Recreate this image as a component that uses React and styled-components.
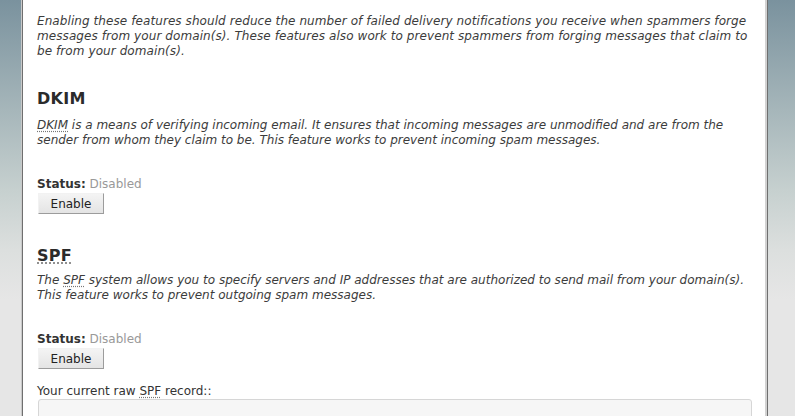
import React from 'react';
import styled, { createGlobalStyle } from 'styled-components';

const GlobalStyle = createGlobalStyle`
  html, body {
    margin: 0;
    padding: 0;
    background: #e5e5e5;
  }
  body {
    font-family: Verdana, "DejaVu Sans", sans-serif;
    font-size: 12px;
    color: #333;
  }
`;

const App = () => {
  return (
    <>
      <GlobalStyle />
      <Page>
        <Rail side="left" />
        <Main>
          {/* intro */}
          <Intro>
            Enabling these features should reduce the number of failed delivery notifications you receive when
            spammers forge messages from your domain(s). These features also work to prevent spammers from
            forging messages that claim to be from your domain(s).
          </Intro>

          {/* DKIM */}
          <Section>
            <Heading>DKIM</Heading>
            <Description>
              <Abbr title="DomainKeys Identified Mail">DKIM</Abbr> is a means of verifying incoming email. It
              ensures that incoming messages are unmodified and are from the sender from whom they claim to be.
              This feature works to prevent incoming spam messages.
            </Description>
            <Status>
              <strong>Status:</strong> <Muted>Disabled</Muted>
            </Status>
            <Button>Enable</Button>
          </Section>

          {/* SPF */}
          <Section>
            <Heading tight>
              <Abbr title="Sender Policy Framework">SPF</Abbr>
            </Heading>
            <Description>
              The <Abbr title="Sender Policy Framework">SPF</Abbr> system allows you to specify servers and IP
              addresses that are authorized to send mail from your domain(s). This feature works to prevent
              outgoing spam messages.
            </Description>
            <Status>
              <strong>Status:</strong> <Muted>Disabled</Muted>
            </Status>
            <Button>Enable</Button>
            <RecordLabel>
              Your current raw <Abbr title="Sender Policy Framework">SPF</Abbr> record::
            </RecordLabel>
            <RecordBox readOnly value="" />
          </Section>
        </Main>
        <Rail side="right" />
      </Page>
    </>
  );
};

const Page = styled.div`
  display: flex;
  width: 795px;
  height: 416px;
  overflow: hidden;
`;

const Rail = styled.div`
  flex: 0 0 ${(p) => (p.side === 'left' ? '21px' : '27px')};
  background: linear-gradient(#7a929e 0, #a6b6ba 110px, #c6d0cf 190px, #dcdfde 250px, #e6e6e6 300px, #e6e6e6 100%);
  ${(p) =>
    p.side === 'left'
      ? 'border-right: 1px solid #c9c9c9;'
      : 'border-left: 1px solid #6f6f6f;'}
`;

const Main = styled.main`
  flex: 1;
  background: #fff;
  border-left: 1px solid #6f6f6f;
  border-right: 2px solid #d2d2d2;
  padding: 14px 13px 0 14px;
  overflow: hidden;
`;

const Intro = styled.p`
  margin: 0;
  font-style: italic;
  line-height: 15px;
  letter-spacing: 0.08px;
  color: #3c3c3c;
`;

const Section = styled.section`
  margin-top: 31px;

  & + & {
    margin-top: 33px;
  }
`;

const Heading = styled.h2`
  margin: 0 0 ${(p) => (p.tight ? '8px' : '10px')};
  font-size: 16px;
  line-height: 18px;
  font-weight: bold;
  color: #2b2b2b;
  letter-spacing: 0.3px;
`;

const Description = styled.p`
  margin: 0 0 29px;
  font-style: italic;
  line-height: 15px;
  color: #3c3c3c;
`;

const Abbr = styled.abbr`
  text-decoration: underline dotted #777;
  text-underline-offset: 2px;
  cursor: help;
`;

const Status = styled.div`
  line-height: 15px;
  color: #333;
`;

const Muted = styled.span`
  color: #999;
`;

const Button = styled.button`
  display: block;
  width: 66px;
  height: 21px;
  margin: 1px 0 0 1px;
  padding: 0;
  font-family: Verdana, "DejaVu Sans", sans-serif;
  font-size: 12px;
  color: #222;
  background: linear-gradient(#f4f4f4, #e4e4e4);
  border: 1px solid;
  border-color: #f2f2f2 #9c9c9c #9c9c9c #f2f2f2;
  border-radius: 0;
  cursor: pointer;
`;

const RecordLabel = styled.div`
  margin-top: 15px;
  line-height: 15px;
  color: #333;
`;

const RecordBox = styled.textarea`
  display: block;
  box-sizing: border-box;
  width: 714px;
  height: 60px;
  margin: 0 0 0 1px;
  background: #f6f6f6;
  border: 1px solid #d6d6d6;
  border-radius: 3px;
  resize: none;
`;

export default App;
